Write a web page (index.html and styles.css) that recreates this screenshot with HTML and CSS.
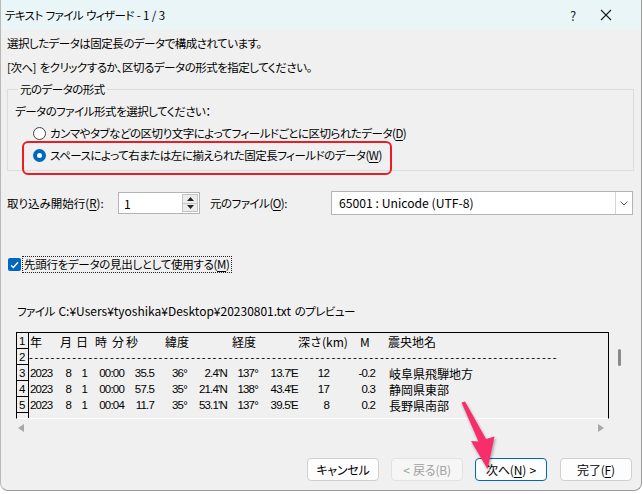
FILE: index.html
```html
<!DOCTYPE html>
<html lang="ja">
<head>
<meta charset="utf-8">
<title>テキスト ファイル ウィザード</title>
<link rel="stylesheet" href="styles.css">
</head>
<body>
<div class="window">
  <div class="titlebar">
    <span class="title">テキスト ファイル ウィザード - 1 / 3</span>
    <span class="help">?</span>
    <svg class="close" width="12" height="12" viewBox="0 0 12 12"><path d="M1 1 L11 11 M11 1 L1 11" stroke="#1a1a1a" stroke-width="1.1" fill="none"/></svg>
  </div>
  <div class="content">
    <p class="line first">選択したデータは固定長のデータで構成されています。</p>
    <p class="line">[次へ] をクリックするか、区切るデータの形式を指定してください。</p>
    <fieldset class="group">
      <legend>元のデータの形式</legend>
      <div class="prompt">データのファイル形式を選択してください：</div>
      <div class="radio"><span class="rb"></span><span>カンマやタブなどの区切り文字によってフィールドごとに区切られたデータ(<u>D</u>)</span></div>
      <div class="radio marked"><span class="rb on"></span><span>スペースによって右または左に揃えられた固定長フィールドのデータ(<u>W</u>)</span></div>
    </fieldset>
    <div class="opts">
      <span class="lbl1">取り込み開始行(<u>R</u>):</span>
      <div class="spin">
        <span class="spin-val">1</span>
        <span class="spin-btns">
          <span class="sb"><svg width="7" height="4" viewBox="0 0 7 4"><path d="M0 4 L3.5 0 L7 4 Z" fill="#222"/></svg></span>
          <span class="sb"><svg width="7" height="4" viewBox="0 0 7 4"><path d="M0 0 L3.5 4 L7 0 Z" fill="#222"/></svg></span>
        </span>
      </div>
      <span class="lbl2">元のファイル(<u>O</u>):</span>
      <div class="select">
        <span class="sel-val">65001 : Unicode (UTF-8)</span>
        <span class="sel-btn"><svg width="8" height="5" viewBox="0 0 8 5"><path d="M0.5 0.5 L4 4 L7.5 0.5" stroke="#555" stroke-width="1" fill="none"/></svg></span>
      </div>
    </div>
    <div class="check">
      <span class="cb"><svg width="9" height="8" viewBox="0 0 9 8"><path d="M1 4.2 L3.4 6.5 L8 1.2" stroke="#fff" stroke-width="1.3" fill="none"/></svg></span>
      <span class="cb-text">先頭行をデータの見出しとして使用する(<u>M</u>)</span>
    </div>
    <div class="pv-label">ファイル <span class="lt">C:¥Users¥tyoshika¥Desktop¥20230801.txt</span> のプレビュー</div>
    <div class="preview">
      <div class="pv-box">
        <div class="pv-row"><span class="rn">1</span>
          <div class="hdr"><span>年</span><span>月</span><span>日</span><span>時</span><span>分</span><span>秒</span><span>緯度</span><span>経度</span><span>深さ(km)</span><span>M</span><span>震央地名</span></div>
        </div>
        <div class="pv-row"><span class="rn">2</span>
          <div class="dash">--------------------------------------------------------------------------------------------------</div>
        </div>
        <div class="pv-row"><span class="rn">3</span>
          <div class="rec"><span>2023</span><span>8</span><span>1</span><span>00:00</span><span>35.5</span><span>36°</span><span>2.4'N</span><span>137°</span><span>13.7'E</span><span>12</span><span>-0.2</span><span class="nm">岐阜県飛騨地方</span></div>
        </div>
        <div class="pv-row"><span class="rn">4</span>
          <div class="rec"><span>2023</span><span>8</span><span>1</span><span>00:00</span><span>57.5</span><span>35°</span><span>21.4'N</span><span>138°</span><span>43.4'E</span><span>17</span><span>0.3</span><span class="nm">静岡県東部</span></div>
        </div>
        <div class="pv-row"><span class="rn">5</span>
          <div class="rec"><span>2023</span><span>8</span><span>1</span><span>00:04</span><span>11.7</span><span>35°</span><span>53.1'N</span><span>137°</span><span>39.5'E</span><span>8</span><span>0.2</span><span class="nm">長野県南部</span></div>
        </div>
        <div class="pv-row"><span class="rn"></span></div>
      </div>
      <div class="vscroll"><span class="thumb"></span></div>
      <div class="hscroll">
        <svg width="6" height="8" viewBox="0 0 6 8"><path d="M6 0 L0 4 L6 8 Z" fill="#a8a8a8"/></svg>
        <svg width="6" height="8" viewBox="0 0 6 8"><path d="M0 0 L6 4 L0 8 Z" fill="#a8a8a8"/></svg>
      </div>
    </div>
    <div class="buttons">
      <button class="btn">キャンセル</button>
      <button class="btn disabled">&lt; 戻る(B)</button>
      <button class="btn default">次へ(<u>N</u>) &gt;</button>
      <button class="btn">完了(<u>F</u>)</button>
    </div>
  </div>
  <svg class="pointer" width="643" height="494" viewBox="0 0 643 494">
    <path d="M461.5 402.5 L465 401.5 L486 439 L494.5 436.5 L487.5 469 L471 441 L478.5 441.5 Z" fill="#fa2d6b"/>
  </svg>
</div>
</body>
</html>
```

FILE: styles.css
```css
* { box-sizing: border-box; }
html, body { margin: 0; padding: 0; }
body {
  width: 643px;
  height: 494px;
  overflow: hidden;
  background: #ffffff;
  font-family: "Noto Sans CJK JP", "Noto Sans", sans-serif;
  font-size: 11.5px;
  letter-spacing: -0.5px;
  word-spacing: 1.5px;
  color: #000;
  font-feature-settings: "palt";
}
u { text-decoration: underline; text-underline-offset: 2px; }
.lt { font-size: 12px; letter-spacing: 0; word-spacing: 0; }

.window {
  position: relative;
  width: 642px;
  height: 491px;
  background: #f0f0f0;
  border-left: 1px solid #b8b8b8;
  border-right: 1px solid #9c9c9c;
  border-bottom: 1px solid #9c9c9c;
  border-radius: 0 0 8px 8px;
  overflow: hidden;
}

.titlebar {
  height: 30px;
  background: #eaf5f8;
  display: flex;
  align-items: center;
  padding-left: 4px;
}
.title { flex: 1; letter-spacing: -0.6px; word-spacing: 1px; }
.help { width: 30px; font-size: 13px; color: #222; letter-spacing: 0; }
.close { margin-right: 29px; }

.content { padding: 3px 7px 0 6px; }
.line { margin: 0 0 4px; line-height: 20px; }

.group {
  margin: 4px 0 0;
  padding: 4px 7px 5px 7px;
  border: 1px solid #dcdcdc;
  min-width: 0;
}
.group legend {
  padding: 0 2px;
  margin-left: 3px;
  line-height: 16px;
}
.prompt { line-height: 20px; margin-bottom: 1px; }
.radio {
  position: relative;
  display: flex;
  align-items: center;
  height: 20px;
  margin-top: 2px;
  padding-left: 18px;
  gap: 4px;
}
.rb {
  width: 13px;
  height: 13px;
  border-radius: 50%;
  border: 1px solid #444;
  background: #fff;
}
.rb.on {
  border: none;
  background: #0067c0;
  display: flex;
  align-items: center;
  justify-content: center;
}
.rb.on::before {
  content: "";
  width: 5px;
  height: 5px;
  border-radius: 50%;
  background: #fff;
}
.marked::after {
  content: "";
  position: absolute;
  left: 7px;
  top: -4px;
  width: 366px;
  height: 30px;
  border: 2px solid #ec1c24;
  border-radius: 6px;
}

.opts {
  display: flex;
  align-items: center;
  margin-top: 20px;
  height: 24px;
}
.lbl1 { width: 111px; letter-spacing: 0; }
.spin {
  width: 82px;
  height: 22px;
  background: #fff;
  border: 1px solid #b4b4b4;
  display: flex;
  align-items: center;
}
.spin-val { flex: 1; padding-left: 5px; font-size: 12px; }
.spin-btns {
  display: flex;
  flex-direction: column;
  width: 16px;
  height: 18px;
  margin-right: 1px;
  border: 1px solid #c4c4c4;
}
.sb {
  flex: 1;
  display: flex;
  align-items: center;
  justify-content: center;
  background: #ececec;
}
.sb + .sb { border-top: 1px solid #c4c4c4; }
.lbl2 { width: 121px; margin-left: 10px; }
.select {
  flex: 1;
  height: 24px;
  background: #fff;
  border: 1px solid #b4b4b4;
  display: flex;
  align-items: center;
  margin-right: 1px;
}
.sel-val { flex: 1; padding-left: 7px; font-size: 12.2px; letter-spacing: 0; word-spacing: 0; }
.sel-btn {
  width: 17px;
  height: 100%;
  border-left: 1px solid #d4d4d4;
  display: flex;
  align-items: center;
  justify-content: center;
}

.check {
  display: flex;
  align-items: center;
  margin-top: 41px;
  height: 17px;
}
.cb {
  width: 13px;
  height: 13px;
  border-radius: 2px;
  background: #0067c0;
  display: flex;
  align-items: center;
  justify-content: center;
  margin-left: 1px;
}
.cb-text {
  margin-left: 1px;
  border: 1px dotted #222;
  line-height: 15px;
  padding: 0 1px 0 1px;
  letter-spacing: -0.3px;
}

.pv-label { margin-top: 28px; line-height: 20px; padding-left: 10px; }

.preview {
  display: grid;
  grid-template-columns: 593px 18px;
  grid-template-rows: 87px 20px;
  margin-top: 11px;
  margin-left: 9px;
}
.pv-box {
  border: 1px solid #000;
  border-bottom: 1px solid #fff;
  overflow: hidden;
  font-feature-settings: normal;
  letter-spacing: 0;
  word-spacing: 0;
}
.pv-row { display: flex; height: 16px; }
.rn {
  width: 12px;
  flex: none;
  border-right: 1px solid #000;
  border-bottom: 1px solid #000;
  font-family: "Liberation Sans", sans-serif;
  font-size: 11.5px;
  line-height: 17px;
  padding-left: 2px;
}
.pv-row:last-child .rn { border-bottom: none; }
.hdr {
  display: grid;
  grid-template-columns: 30px 16px 19px 17px 14px 39px 67px 66px 62px 28px auto;
  padding-left: 1px;
  font-family: "Noto Sans CJK JP", sans-serif;
  font-size: 12px;
  line-height: 17px;
  white-space: nowrap;
}
.dash {
  font-family: "Liberation Sans", sans-serif;
  font-size: 11.5px;
  line-height: 16px;
  letter-spacing: 1.57px;
  white-space: nowrap;
}
.rec {
  display: grid;
  grid-template-columns: 24px 18px 16px 37px 30px 33px 40px 31px 40px 31px 46px auto;
  font-family: "Liberation Sans", sans-serif;
  font-size: 11.5px;
  letter-spacing: -0.8px;
  line-height: 17px;
  white-space: nowrap;
}
.rec span { text-align: right; }
.rec span:first-child { text-align: left; padding-left: 1px; }
.rec .nm {
  text-align: left;
  padding-left: 14px;
  font-family: "Noto Sans CJK JP", sans-serif;
  font-size: 12px;
  letter-spacing: 0;
}
.vscroll { padding: 17px 0 0 9px; }
.thumb {
  display: block;
  width: 3px;
  height: 17px;
  border-radius: 2px;
  background: #8a8a8a;
}
.hscroll {
  grid-column: 1 / 3;
  display: flex;
  justify-content: space-between;
  align-items: center;
  padding: 0 23px 2px 2px;
}

.buttons {
  display: flex;
  justify-content: flex-end;
  gap: 12px;
  margin-top: 19px;
  margin-right: 2px;
}
.btn {
  width: 72px;
  height: 23px;
  border: 1px solid #d0d0d0;
  border-radius: 4px;
  background: #fdfdfd;
  font-family: "Noto Sans CJK JP", sans-serif;
  font-feature-settings: "palt";
  font-size: 12px;
  letter-spacing: -0.2px;
  word-spacing: 1px;
  color: #000;
  padding: 0;
}
.btn.disabled { color: #a0a0a0; background: #f6f6f6; border-color: #e2e2e2; }
.btn.default { border-color: #0067c0; }
.buttons .btn:last-child { margin-left: 1px; }

.pointer {
  position: absolute;
  left: -1px;
  top: 0;
  pointer-events: none;
  filter: drop-shadow(1px 2px 1.5px rgba(0,0,0,0.35));
}
```
